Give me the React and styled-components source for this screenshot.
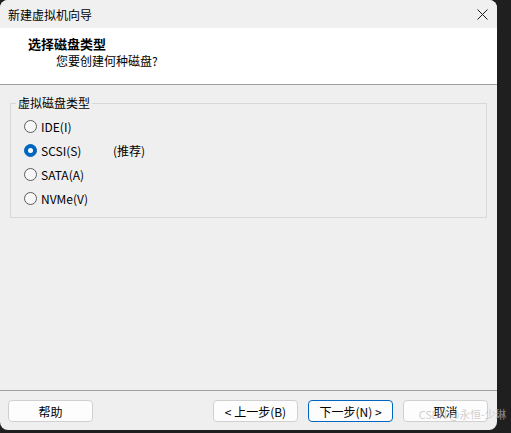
import React, { useState } from 'react';
import styled, { createGlobalStyle } from 'styled-components';

const GlobalStyle = createGlobalStyle`
  html, body {
    margin: 0;
    padding: 0;
    background: #1f1f1f;
  }
  body {
    font-family: "Noto Sans CJK SC", "Microsoft YaHei", sans-serif;
    font-size: 12px;
    color: #000;
  }
`;

const Screen = styled.div`
  width: 511px;
  height: 433px;
  background: #1f1f1f;
  position: relative;
  overflow: hidden;
`;

const Window = styled.div`
  width: 497px;
  height: 430px;
  background: #efefef;
  border-radius: 8px;
  overflow: hidden;
  display: flex;
  flex-direction: column;
`;

const TitleBar = styled.div`
  height: 28px;
  flex: none;
  display: flex;
  align-items: center;
  justify-content: space-between;
  padding: 0 9px 0 8px;
  background: #f0f0f0;
  font-size: 12px;
`;

const CloseButton = styled.div`
  width: 12px;
  height: 12px;
  display: flex;
  align-items: center;
  justify-content: center;
`;

const Header = styled.div`
  flex: none;
  height: 57px;
  box-sizing: border-box;
  background: #fff;
  border-bottom: 1px solid #a0a0a0;
  padding: 8px 0 0 28px;
`;

const Heading = styled.div`
  font-weight: 700;
  font-size: 13px;
  line-height: 16px;
`;

const SubHeading = styled.div`
  margin-left: 28px;
  line-height: 16px;
  margin-top: 1px;
`;

const Body = styled.div`
  flex: 1;
  padding: 10px 0 0 10px;
`;

const GroupBox = styled.fieldset`
  width: 477px;
  box-sizing: border-box;
  margin: 0;
  padding: 3px 0 7px 5px;
  border: 1px solid #d8d8d8;
`;

const Legend = styled.legend`
  padding: 0 2px;
  line-height: 16px;
`;

const RadioRow = styled.label`
  height: 24px;
  display: flex;
  align-items: center;
  padding-left: 8px;
`;

const RadioCircle = styled.span`
  width: 13px;
  height: 13px;
  box-sizing: border-box;
  border-radius: 50%;
  flex: none;
  display: flex;
  align-items: center;
  justify-content: center;
  border: 1px solid ${(p) => (p.checked ? '#0067c0' : '#5d5d5d')};
  background: ${(p) => (p.checked ? '#0067c0' : '#f7f7f7')};

  &::after {
    content: '';
    display: ${(p) => (p.checked ? 'block' : 'none')};
    width: 5px;
    height: 5px;
    border-radius: 50%;
    background: #fff;
  }
`;

const RadioText = styled.span`
  margin-left: 4px;
  min-width: 72px;
`;

const Footer = styled.div`
  height: 40px;
  flex: none;
  border-top: 1px solid #a0a0a0;
  box-sizing: border-box;
  display: flex;
  justify-content: space-between;
  padding: 9px 9px 0 8px;
`;

const ButtonGroup = styled.div`
  display: flex;
  gap: 10px;
`;

const Button = styled.div`
  width: 85px;
  height: 22px;
  box-sizing: border-box;
  border: 1px solid ${(p) => (p.primary ? '#0067c0' : '#d0d0d0')};
  border-radius: 4px;
  background: #fdfdfd;
  display: flex;
  align-items: center;
  justify-content: center;
  font-size: 12px;
`;

const Watermark = styled.div`
  position: absolute;
  right: 5px;
  bottom: 13px;
  font-size: 11px;
  line-height: 12px;
  color: rgba(185, 185, 185, 0.7);
  letter-spacing: -0.2px;
  pointer-events: none;
`;

const diskTypes = [
  { id: 'ide', label: 'IDE(I)' },
  { id: 'scsi', label: 'SCSI(S)', note: '(推荐)' },
  { id: 'sata', label: 'SATA(A)' },
  { id: 'nvme', label: 'NVMe(V)' },
];

export default function App() {
  const [disk, setDisk] = useState('scsi');

  return (
    <Screen>
      <GlobalStyle />
      <Window>
        <TitleBar>
          <span>新建虚拟机向导</span>
          <CloseButton>
            <svg width="11" height="11" viewBox="0 0 11 11">
              <path d="M0.5 0.5 L10.5 10.5 M10.5 0.5 L0.5 10.5" stroke="#1a1a1a" strokeWidth="1" />
            </svg>
          </CloseButton>
        </TitleBar>
        <Header>
          <Heading>选择磁盘类型</Heading>
          <SubHeading>您要创建何种磁盘?</SubHeading>
        </Header>
        <Body>
          <GroupBox>
            <Legend>虚拟磁盘类型</Legend>
            {diskTypes.map((t) => (
              <RadioRow key={t.id} onClick={() => setDisk(t.id)}>
                <RadioCircle checked={disk === t.id} />
                <RadioText>{t.label}</RadioText>
                {t.note && <span>{t.note}</span>}
              </RadioRow>
            ))}
          </GroupBox>
        </Body>
        <Footer>
          <Button>帮助</Button>
          <ButtonGroup>
            <Button>&lt; 上一步(B)</Button>
            <Button primary>下一步(N) &gt;</Button>
            <Button>取消</Button>
          </ButtonGroup>
        </Footer>
      </Window>
      <Watermark>CSDN @永恒-少琳</Watermark>
    </Screen>
  );
}
